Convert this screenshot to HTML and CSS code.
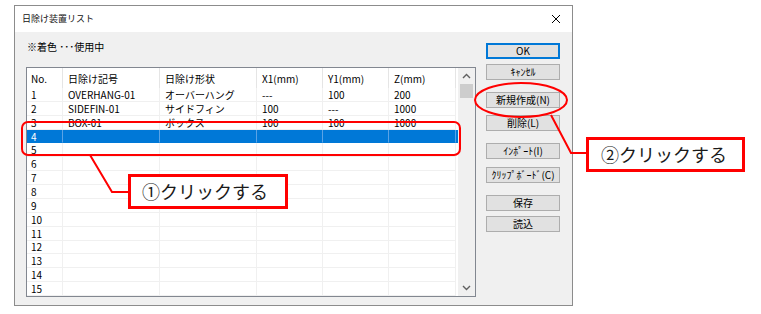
FILE: index.html
```html
<!DOCTYPE html>
<html lang="ja">
<head>
<meta charset="utf-8">
<title>日除け装置リスト</title>
<link rel="stylesheet" href="styles.css">
</head>
<body>
<div class="page">
  <div class="dialog">
    <div class="titlebar">
      <span class="title">日除け装置リスト</span>
      <svg class="close" width="10" height="10" viewBox="0 0 10 10"><path d="M1 1L9 9M9 1L1 9" stroke="#000" stroke-width="1" fill="none"/></svg>
    </div>
    <div class="body">
      <div class="leftcol">
        <div class="note">※着色 ･･･使用中</div>
        <div class="listbox">
          <div class="grid">
            <div class="row head">
              <div class="cell c0">No.</div><div class="cell">日除け記号</div><div class="cell">日除け形状</div><div class="cell">X1(mm)</div><div class="cell">Y1(mm)</div><div class="cell">Z(mm)</div>
            </div>
            <div class="rows">
              <div class="row"><div class="cell c0">1</div><div class="cell">OVERHANG-01</div><div class="cell">オーバーハング</div><div class="cell">---</div><div class="cell">100</div><div class="cell">200</div></div>
              <div class="row"><div class="cell c0">2</div><div class="cell">SIDEFIN-01</div><div class="cell">サイドフィン</div><div class="cell">100</div><div class="cell">---</div><div class="cell">1000</div></div>
              <div class="row"><div class="cell c0">3</div><div class="cell">BOX-01</div><div class="cell">ボックス</div><div class="cell">100</div><div class="cell">100</div><div class="cell">1000</div></div>
              <div class="row sel"><div class="cell c0">4</div><div class="cell"></div><div class="cell"></div><div class="cell"></div><div class="cell"></div><div class="cell"></div></div>
              <div class="row"><div class="cell c0">5</div><div class="cell"></div><div class="cell"></div><div class="cell"></div><div class="cell"></div><div class="cell"></div></div>
              <div class="row"><div class="cell c0">6</div><div class="cell"></div><div class="cell"></div><div class="cell"></div><div class="cell"></div><div class="cell"></div></div>
              <div class="row"><div class="cell c0">7</div><div class="cell"></div><div class="cell"></div><div class="cell"></div><div class="cell"></div><div class="cell"></div></div>
              <div class="row"><div class="cell c0">8</div><div class="cell"></div><div class="cell"></div><div class="cell"></div><div class="cell"></div><div class="cell"></div></div>
              <div class="row"><div class="cell c0">9</div><div class="cell"></div><div class="cell"></div><div class="cell"></div><div class="cell"></div><div class="cell"></div></div>
              <div class="row"><div class="cell c0">10</div><div class="cell"></div><div class="cell"></div><div class="cell"></div><div class="cell"></div><div class="cell"></div></div>
              <div class="row"><div class="cell c0">11</div><div class="cell"></div><div class="cell"></div><div class="cell"></div><div class="cell"></div><div class="cell"></div></div>
              <div class="row"><div class="cell c0">12</div><div class="cell"></div><div class="cell"></div><div class="cell"></div><div class="cell"></div><div class="cell"></div></div>
              <div class="row"><div class="cell c0">13</div><div class="cell"></div><div class="cell"></div><div class="cell"></div><div class="cell"></div><div class="cell"></div></div>
              <div class="row"><div class="cell c0">14</div><div class="cell"></div><div class="cell"></div><div class="cell"></div><div class="cell"></div><div class="cell"></div></div>
              <div class="row"><div class="cell c0">15</div><div class="cell"></div><div class="cell"></div><div class="cell"></div><div class="cell"></div><div class="cell"></div></div>
            </div>
          </div>
          <div class="scrollbar">
            <div class="arrow"><svg width="9" height="6" viewBox="0 0 9 6"><path d="M1 5L4.5 1.5L8 5" stroke="#606060" stroke-width="1.4" fill="none"/></svg></div>
            <div class="thumb"></div>
            <div class="track"></div>
            <div class="arrow"><svg width="9" height="6" viewBox="0 0 9 6"><path d="M1 1L4.5 4.5L8 1" stroke="#606060" stroke-width="1.4" fill="none"/></svg></div>
          </div>
        </div>
      </div>
      <div class="buttons">
        <div class="btn focus">OK</div>
        <div class="btn g1">ｷｬﾝｾﾙ</div>
        <div class="btn g2">新規作成(N)</div>
        <div class="btn g3">削除(L)</div>
        <div class="btn g2">ｲﾝﾎﾟｰﾄ(I)</div>
        <div class="btn g4">ｸﾘｯﾌﾟﾎﾞｰﾄﾞ(C)</div>
        <div class="btn g2">保存</div>
        <div class="btn g1">読込</div>
      </div>
    </div>
  </div>

  <svg class="overlay" width="761" height="314" viewBox="0 0 761 314">
    <rect x="22" y="122" width="438" height="33" rx="6" ry="6" fill="none" stroke="#ff0000" stroke-width="2"/>
    <polyline points="90,155 112,192 130,192" fill="none" stroke="#ff0000" stroke-width="2"/>
    <ellipse cx="521" cy="100" rx="46" ry="17" fill="none" stroke="#ff0000" stroke-width="2"/>
    <polyline points="551,115 571,153 588,153" fill="none" stroke="#ff0000" stroke-width="2"/>
  </svg>
  <div class="callout c1">①クリックする</div>
  <div class="callout c2">②クリックする</div>
</div>
</body>
</html>
```

FILE: styles.css
```css
* { box-sizing: border-box; }
html, body { margin: 0; padding: 0; background: #fff; }
body {
  font-family: "Noto Sans CJK JP", "Noto Sans", sans-serif;
  color: #000;
}
.page {
  position: relative;
  width: 761px;
  height: 314px;
  overflow: hidden;
  padding: 5px 0 0 14px;
}
.dialog {
  width: 559px;
  height: 301px;
  border: 1px solid #8c8c8c;
  display: flex;
  flex-direction: column;
}
.titlebar {
  height: 26px;
  background: #fff;
  display: flex;
  align-items: center;
  justify-content: space-between;
  padding: 0 11px 0 7px;
}
.title { font-size: 9px; line-height: 12px; color: #111; }
.body {
  flex: 1;
  background: #f0f0f0;
  display: flex;
  padding-left: 11px;
}
.leftcol { width: 450px; display: flex; flex-direction: column; }
.note {
  font-size: 10px;
  line-height: 14px;
  margin-top: 8px;
  padding-left: 1px;
}
.listbox {
  margin-top: 13px;
  width: 450px;
  height: 230px;
  border: 1px solid #828790;
  background: #fff;
  display: flex;
}
.grid { width: 431px; display: flex; flex-direction: column; }
.row {
  display: grid;
  grid-template-columns: 36px 97px 97px 66px 66px 67px;
  font-size: 10px;
}
.row .cell {
  border-right: 1px solid #f0f0f0;
  border-bottom: 1px solid #f0f0f0;
  padding-left: 5px;
  white-space: nowrap;
  display: flex;
  align-items: center;
  line-height: 11px;
}
.row .cell.c0 { padding-left: 4px; }
.head { height: 20px; }
.head .cell { border-right-color: #e5e5e5; border-bottom: none; }
.rows {
  height: 208px;
  display: grid;
  grid-template-rows: repeat(15, 1fr);
}
.sel { background: #0078d7; color: #fff; }
.sel .cell { border-right-color: #5aa3e6; border-bottom-color: #0078d7; }
.scrollbar {
  width: 17px;
  background: #f0f0f0;
  display: flex;
  flex-direction: column;
}
.arrow { height: 16px; display: flex; align-items: center; justify-content: center; }
.thumb { height: 14px; margin: 0 2px; background: #cdcdcd; }
.track { flex: 1; }
.buttons {
  margin-left: 10px;
  padding-top: 11px;
  display: flex;
  flex-direction: column;
}
.btn {
  width: 74px;
  height: 16px;
  border: 1px solid #adadad;
  background: #e1e1e1;
  font-size: 10px;
  line-height: 14px;
  text-align: center;
  white-space: nowrap;
}
.btn.focus { border-color: #0078d7; box-shadow: inset 0 0 0 1px #0078d7; }
.btn.g1 { margin-top: 5px; }
.btn.g2 { margin-top: 12px; }
.btn.g3 { margin-top: 7px; }
.btn.g4 { margin-top: 8px; }
.overlay { position: absolute; left: 0; top: 0; pointer-events: none; }
.callout {
  position: absolute;
  height: 35px;
  border: 3px solid #ff0000;
  background: #fff;
  font-size: 18px;
  line-height: 29px;
  color: #1a1a1a;
  white-space: nowrap;
}
.callout.c1 { left: 128px; top: 174px; width: 160px; padding-left: 11px; }
.callout.c2 { left: 586px; top: 137px; width: 159px; padding-left: 12px; }
```
